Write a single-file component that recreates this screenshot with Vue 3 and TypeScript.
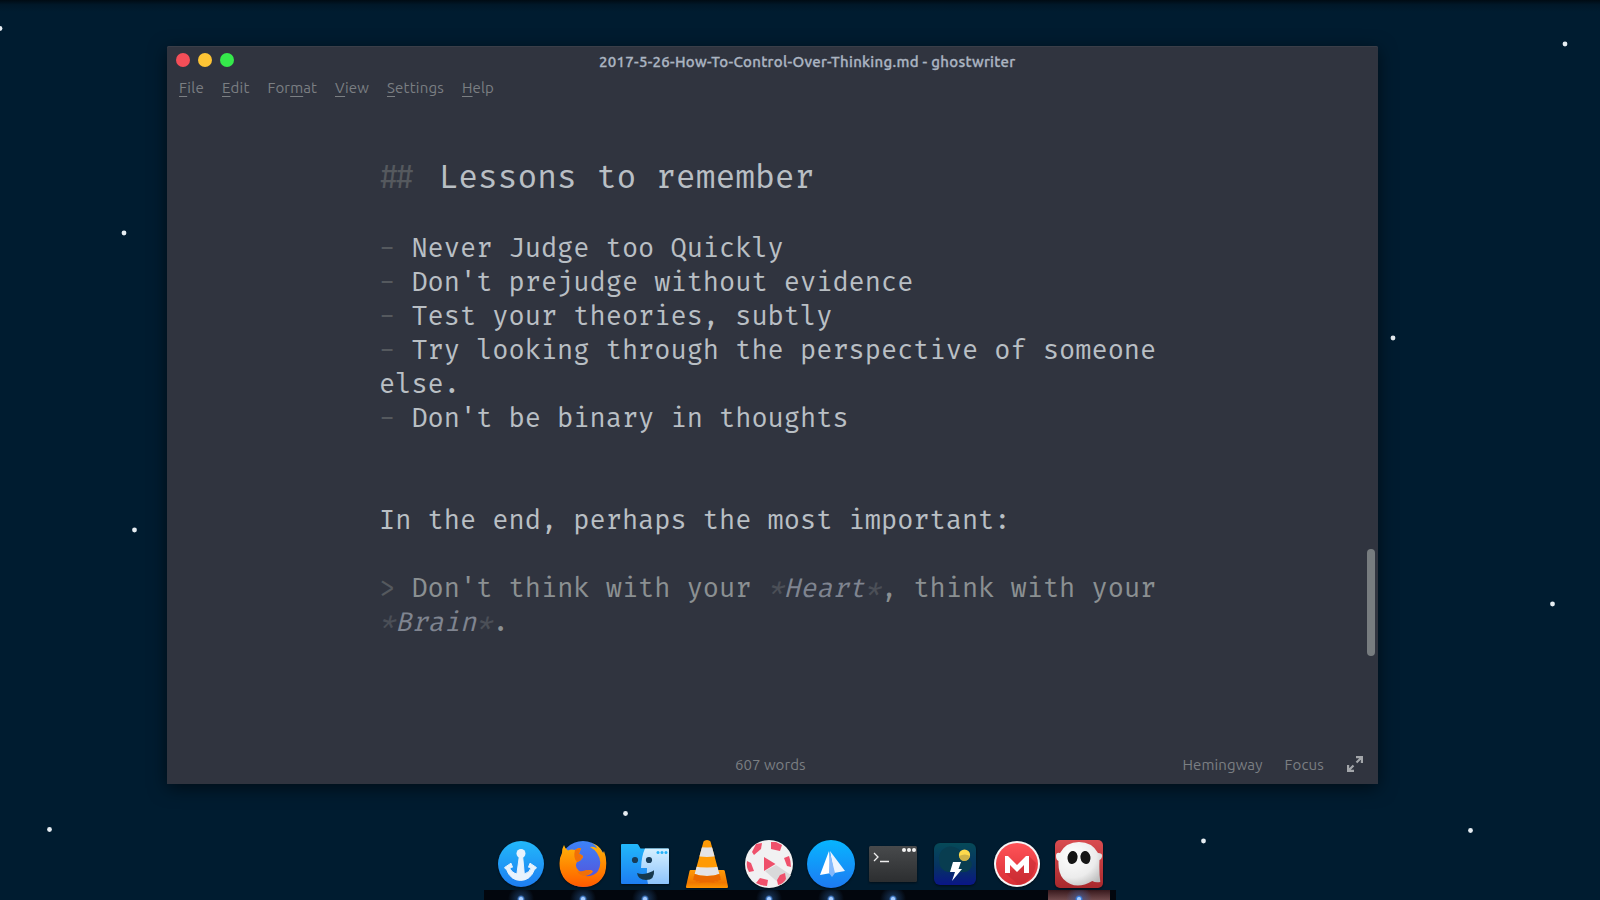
<script setup lang="ts">
import type { Directive } from 'vue'

// Spreads a label's letters so that it takes exactly the given width.
const vFit: Directive<HTMLElement, number> = {
  mounted(el, binding) {
    const count = (el.textContent ?? '').trim().length
    const natural = el.getBoundingClientRect().width
    el.style.letterSpacing = `${(binding.value - natural) / count}px`
  },
}

const stars = [
  [0, 28.5], [124, 233], [134.5, 530], [49.5, 829.5], [625.5, 813.5],
  [1203.5, 841], [1470.5, 830.5], [1552.5, 604], [1393, 338], [1565, 44],
]

const menus = [
  { pre: '', key: 'F', post: 'ile', width: 25 },
  { pre: '', key: 'E', post: 'dit', width: 27.5 },
  { pre: 'For', key: 'm', post: 'at', width: 49.5 },
  { pre: '', key: 'V', post: 'iew', width: 34 },
  { pre: '', key: 'S', post: 'ettings', width: 57 },
  { pre: '', key: 'H', post: 'elp', width: 32 },
]

const lines = [
  { mark: '- ', text: 'Never Judge too Quickly' },
  { mark: '- ', text: "Don't prejudge without evidence" },
  { mark: '- ', text: 'Test your theories, subtly' },
  { mark: '- ', text: 'Try looking through the perspective of someone' },
  { mark: '', text: 'else.' },
  { mark: '- ', text: "Don't be binary in thoughts" },
]

const running = [true, true, true, false, true, true, true, false, false, true]
</script>

<template>
  <div class="desktop">
    <svg class="stars" width="1600" height="900">
      <circle v-for="(s, i) in stars" :key="i" :cx="s[0]" :cy="s[1]" r="2.4" fill="#e6edf2" />
    </svg>
    <div class="topshade"></div>

    <main class="window">
      <header class="titlebar">
        <div class="lights"><i class="red"></i><i class="yellow"></i><i class="green"></i></div>
        <div class="title"><span v-fit="416.500">2017-5-26-How-To-Control-Over-Thinking.md - ghostwriter</span></div>
      </header>
      <nav class="menu">
        <span v-for="m in menus" :key="m.key" v-fit="m.width">{{ m.pre }}<u>{{ m.key }}</u>{{ m.post }}</span>
      </nav>
      <section class="editor">
        <h2><span class="mark hashes">##</span> Lessons to remember</h2>
        <div class="text">
          <p v-for="l in lines" :key="l.text"><span class="mark">{{ l.mark }}</span>{{ l.text }}</p>
          <p class="para">In the end, perhaps the most important:</p>
          <p class="quote"><span class="mark">&gt;</span> Don't think with your <em><b>*</b>Heart<b>*</b></em>, think with your</p>
          <p class="quote"><em><b>*</b>Brain<b>*</b></em>.</p>
        </div>
        <div class="thumb"></div>
      </section>
      <footer class="status">
        <div class="words"><span v-fit="70.500">607 words</span></div>
        <div class="modes">
          <span v-fit="80">Hemingway</span>
          <span v-fit="39.500">Focus</span>
          <svg width="16" height="16" viewBox="0 0 16 16" fill="none" stroke="#a3a6aa" stroke-width="2.200">
            <path d="M9 1.100h5.900V7M14.500 1.500 9.500 6.500M7 14.900H1.100V9M1.500 14.500 6.500 9.500" />
          </svg>
        </div>
      </footer>
    </main>

    <div class="dock">
      <div class="icons">
        <svg viewBox="0 0 48 48">
          <defs>
            <linearGradient id="blue" x1="0" y1="0" x2="0" y2="1"><stop stop-color="#22b8fa" /><stop offset="1" stop-color="#1d7df2" /></linearGradient>
          </defs>
          <circle cx="24" cy="24" r="23" fill="url(#blue)" />
          <circle cx="24" cy="13.500" r="4.500" fill="#e8f3fd" />
          <path d="M22.500 15h3l1.800 19q5.500-1.500 7-6.500l-2.800-.300 1.500-4 6.300 4.200q.5 1-1.800 2-4 11-14 11t-14-11q-2.300-1-1.800-2l6.300-4.200 1.500 4-2.800.3q1.500 5 7.200 6.500z" fill="#e8f3fd" stroke="#e8f3fd" stroke-linejoin="round" />
        </svg>

        <svg viewBox="0 0 48 48">
          <defs>
            <linearGradient id="fox" x1="0" y1="0" x2="0" y2="1"><stop stop-color="#ffb60b" /><stop offset=".55" stop-color="#ff8500" /><stop offset="1" stop-color="#ff5a00" /></linearGradient>
            <linearGradient id="globe" x1="0" y1="0" x2="0" y2="1"><stop stop-color="#3c83f8" /><stop offset="1" stop-color="#5a4bd6" /></linearGradient>
          </defs>
          <circle cx="24" cy="24" r="23" fill="url(#globe)" />
          <path d="M5 5q1 4 4 5.500 3-1.500 7-.500 3-2.500 6-2l-2 6q4 1 4 3-2 4-6 5-3 5 2 9 3 1.500 6 0 6-2 8 .500-2 3-8 4.500 9 1 13-5 5-9-1-18-3-4-7-6 4-1 7 1.500Q37 4 31 3q9 1 13 10l1-2q4 10 1 22-6 14-22 14Q5 46 1 29-.500 19 3 13 3 8 5 5z" fill="url(#fox)" />
          <path d="M16 10q3-2.500 6-2l-2 6q4 1 4 3-2 4-6 5-4-4-2-12zM18 31.500q3 .500 6-.500 6-2 8 .500-3 4-8 4.500-4-1-6-4.500z" fill="#f07008" />
        </svg>

        <svg viewBox="0 0 48 48">
          <defs><linearGradient id="pale" x1="0" y1="0" x2="0" y2="1"><stop stop-color="#d5f0ff" /><stop offset="1" stop-color="#8dc3fb" /></linearGradient></defs>
          <path d="M0 5q0-1 1-1h15q1 0 1.500 1l2 3.500H47q1 0 1 1V43q0 1-1 1H1q-1 0-1-1z" fill="url(#blue)" />
          <path d="M24 8.500H47q1 0 1 1V43q0 1-1 1H27q-1.500-6-1-16h-6q.5-12 4-19.500z" fill="url(#pale)" />
          <circle cx="14" cy="20" r="3.100" fill="#183c57" /><circle cx="28" cy="20" r="3.100" fill="#183c57" />
          <path d="M16 33q5 2 11 0t6-3q1 10-8 10-8 0-9-7z" fill="#16384d" />
          <g fill="#25b2f8"><circle cx="37" cy="12.500" r="1.500" /><circle cx="41" cy="12.500" r="1.500" /><circle cx="45" cy="12.500" r="1.500" /></g>
        </svg>

        <svg viewBox="0 0 48 48">
          <defs>
            <linearGradient id="cone" x1="0" y1="0" x2="0" y2="1"><stop stop-color="#ff9a08" /><stop offset=".7" stop-color="#f07800" /><stop offset="1" stop-color="#ff9500" /></linearGradient>
            <clipPath id="coneShape"><path d="M20.500 1.500q1-1.500 3.500-1.500t3.500 1.500L38 40q-14 5-28 0z" /></clipPath>
          </defs>
          <path d="M7.500 30h33q1 0 1.300 1L45 46.500q0 1.500-1 1.500H4q-1.300 0-1-1.500L6.500 31q.3-1 1-1z" fill="url(#cone)" />
          <path d="M12 33h24l2 6q-2 4-14 4t-14-4z" fill="#e96500" />
          <g clip-path="url(#coneShape)">
            <path d="M9 0h30v45H9z" fill="#ff9a05" />
            <path d="M9 7q15 1 30 0v8q-15 4-30 0zM9 26q15 3 30 0v7q-15 6-30 0z" fill="#e4e3e6" />
            <path d="M9 33q15 6 30 0v12H9z" fill="#ea6900" />
          </g>
        </svg>

        <svg viewBox="0 0 48 48">
          <circle cx="24" cy="24" r="24" fill="#f1f1f2" />
          <path d="M20 31 31 25 46 35q-4 7-10 10z" fill="#d9d9da" />
          <g fill="#ef506b">
            <path d="M7 12 11 4 17 3 16 9 9 15z" /><path d="M26 2h5l6 3-2 6-9-2z" />
            <path d="M39 18l5-2q2 5 2 11l-4-1z" /><path d="M35 35l5-2 1 6q-3 5-8 6l-1-5z" />
            <path d="M15 38l8 2-1 6q-6 0-11-3z" /><path d="M2 21l4 2 3 8-5 1q-3-5-2-11z" />
            <path d="M19 17v14l11.500-7z" />
          </g>
        </svg>

        <svg viewBox="0 0 48 48">
          <defs><linearGradient id="sky" x1="0" y1="0" x2="0" y2="1"><stop stop-color="#07b5ff" /><stop offset="1" stop-color="#1d7af2" /></linearGradient></defs>
          <circle cx="24" cy="24" r="24" fill="url(#sky)" />
          <path d="M22 11 13 35l11-2z" fill="#fff" /><path d="M23 11 38 31l-11 2z" fill="#edf4fe" />
          <path d="M22.500 11 22 33l3 4 3-4z" fill="#84b8fb" />
        </svg>

        <svg viewBox="0 0 48 48">
          <defs><linearGradient id="term" x1="0" y1="0" x2="0" y2="1"><stop stop-color="#484a4c" /><stop offset="1" stop-color="#2c2e30" /></linearGradient></defs>
          <rect y="6" width="48" height="36" rx="1.500" fill="url(#term)" />
          <path d="m5 13 4 4-4 4M11 21.500h9" fill="none" stroke="#eee" stroke-width="1.300" />
          <g fill="#f3f3f3"><circle cx="35" cy="10" r="2" /><circle cx="40" cy="10" r="2" /><circle cx="45" cy="10" r="2" /></g>
        </svg>

        <svg viewBox="0 0 48 48">
          <defs><linearGradient id="night" x1="0" y1="0" x2="0" y2="1"><stop stop-color="#064a58" /><stop offset=".55" stop-color="#063362" /><stop offset="1" stop-color="#0a1687" /></linearGradient></defs>
          <rect x="3" y="3" width="42" height="42" rx="6" fill="url(#night)" />
          <path d="M8 20a12 12 0 0 1 24-3q8 0 9 8-2 8-10 7H17q-9-2-9-12z" fill="#083d50" />
          <circle cx="33.500" cy="15" r="5.600" fill="#fdda4c" /><path d="M28 16q6-3 11 0-1 5-6 5-4 0-5-5z" fill="#cfb347" />
          <path d="M22 22h8l-2.500 7H31L21 41l3-9h-5z" fill="#fff" />
        </svg>

        <svg viewBox="0 0 48 48">
          <defs><linearGradient id="mega" x1="0" y1="0" x2="0" y2="1"><stop stop-color="#ff5358" /><stop offset="1" stop-color="#d92f35" /></linearGradient></defs>
          <circle cx="24" cy="24" r="23" fill="#f6f6f7" /><circle cx="24" cy="24" r="21" fill="url(#mega)" />
          <path d="M36 16 43 23q-2 17-17 22L12 33l12-5z" fill="#bc2730" opacity=".45" />
          <path d="M12 33V16h3l9 9 9-9h3v17h-5v-8l-7 7-7-7v8z" fill="#fff" />
        </svg>

        <svg viewBox="0 0 48 48">
          <defs>
            <linearGradient id="tile" x1="0" y1="0" x2="0" y2="1"><stop stop-color="#d94c50" /><stop offset="1" stop-color="#a8282c" /></linearGradient>
            <radialGradient id="ghost" cx=".35" cy=".3" r=".8"><stop stop-color="#fff" /><stop offset=".65" stop-color="#ececec" /><stop offset="1" stop-color="#bdbdbd" /></radialGradient>
          </defs>
          <rect width="48" height="48" rx="5" fill="url(#tile)" />
          <path d="M5 13Q11 2 24 2t19 11q5 0 4 4-1 3-2.500 3-.5 13 .8 22-5 1-8-1-17 10-29-2Q3 33 3.500 21 1 20 1 16t4-3z" fill="url(#ghost)" />
          <ellipse cx="17.500" cy="17.500" rx="5" ry="6.600" fill="#151515" transform="rotate(8 17.500 17.500)" />
          <ellipse cx="30.500" cy="17.500" rx="5" ry="6.600" fill="#151515" transform="rotate(-8 30.500 17.500)" />
        </svg>
      </div>
      <div class="shelf">
        <span v-for="(on, i) in running" :key="i" :class="{ on, active: i === 9 }"></span>
      </div>
    </div>
  </div>
</template>

<style>
body { margin: 0; overflow: hidden; background: #001c30; }
</style>

<style scoped>
.desktop {
  position: relative;
  width: 1600px;
  height: 900px;
  overflow: hidden;
  background: #001c30;
  font-family: Ubuntu, "Noto Sans", "Open Sans", sans-serif;
  display: flex;
  flex-direction: column;
  justify-content: space-between;
}
.stars { position: absolute; inset: 0; }
.topshade {
  position: absolute;
  inset: 0 0 auto;
  height: 12px;
  background: linear-gradient(rgba(0, 8, 14, .85), rgba(0, 16, 26, .35) 40%, transparent);
}
.window {
  position: relative;
  width: 1211px;
  height: 738px;
  margin: 46px 0 0 167px;
  display: flex;
  flex-direction: column;
  background: #30343f;
  border-radius: 2px 2px 0 0;
  box-shadow: 0 4px 18px rgba(0, 0, 0, .55), inset 0 1px #3a3e48;
}
.titlebar { display: flex; height: 30px; }
.lights { display: flex; gap: 8px; padding: 7px 0 0 9px; }
.lights i { width: 14px; height: 14px; border-radius: 50%; }
.red { background: #f44e58; }
.yellow { background: #fdc435; }
.green { background: #35e94b; }
.title {
  margin-left: 365px;
  font-size: 15px;
  font-weight: 500;
  line-height: 32px;
  color: #abb4c2;
  -webkit-text-stroke: .3px #abb4c2;
  white-space: nowrap;
}
.title span, .menu > span, .status span { display: inline-block; white-space: nowrap; }
.menu {
  display: flex;
  gap: 18px;
  height: 24px;
  padding-left: 12px;
  font-size: 15px;
  line-height: 24px;
  color: #7b7f83;
}
.menu u { text-underline-offset: 3px; text-decoration-thickness: 1px; text-decoration-skip-ink: none; }
.editor {
  position: relative;
  flex: 1;
  padding: 55px 0 0 212px;
  font-family: "Fira Code", "Fira Mono", "Liberation Mono", monospace;
  color: #b9bfc4;
}
h2 {
  margin: 0 0 31px;
  font-size: 32.175px;
  font-weight: 400;
  line-height: 46px;
  white-space: pre;
}
.mark { color: #55595e; }
.hashes { display: inline-block; width: 39.600px; letter-spacing: -4px; }
.text { font-size: 26.325px; line-height: 34px; }
.text p { margin: 0; white-space: pre; }
.text .para { margin: 68px 0 34px; }
.text .quote { color: #8b9092; }
.quote em { color: #7f8490; }
.quote b { font-weight: 400; color: #4b4f57; }
.thumb {
  position: absolute;
  top: 449px;
  right: 3px;
  width: 8px;
  height: 107px;
  border-radius: 4px;
  background: #777c7f;
}
.status {
  display: grid;
  grid-template-columns: 1fr auto;
  height: 38px;
  font-size: 15px;
  line-height: 38px;
  color: #7b7f83;
}
.words { padding-left: 568px; }
.modes { display: flex; align-items: center; gap: 22px; padding-right: 15px; }
.modes svg { margin: -2px 0 0 1px; }
.dock { position: relative; width: 632px; margin-left: 484px; }
.icons { display: flex; gap: 14px; padding: 0 13px 2px; }
.icons svg { width: 48px; height: 48px; filter: drop-shadow(0 1px 1px rgba(0, 0, 0, .5)); }
.shelf { display: flex; height: 10px; padding: 0 6px; background: #02060d; }
.shelf span { width: 62px; height: 10px; }
.on { background: radial-gradient(circle at 50% 9px, #a5ccff 0 1.500px, #4880cc 2.500px, rgba(35, 78, 130, .5) 4px, transparent 13px); }
.active { background: radial-gradient(circle at 50% 9px, #a5ccff 0 1.500px, #3980e4 2.500px, rgba(70, 90, 145, .6) 4px, transparent 13px), linear-gradient(#38191d, #704a4c); }
</style>
